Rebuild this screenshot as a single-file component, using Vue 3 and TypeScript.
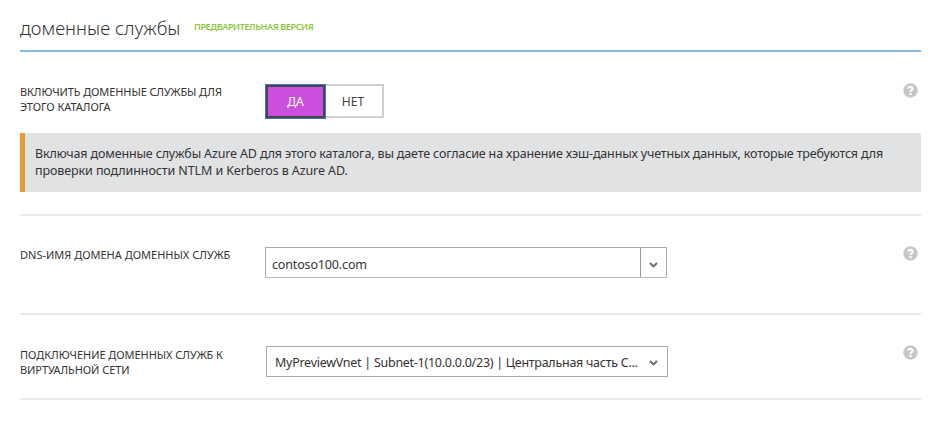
<script setup lang="ts">
import { ref } from 'vue'

const enabled = ref(true)
const domainName = ref('contoso100.com')
const network = 'MyPreviewVnet | Subnet-1(10.0.0.0/23) | Центральная часть С...'
</script>

<template>
  <main class="page">
    <header class="header">
      <h1 class="title">доменные службы</h1>
      <span class="preview">ПРЕДВАРИТЕЛЬНАЯ ВЕРСИЯ</span>
    </header>

    <section class="section section-enable">
      <div class="row">
        <div class="label"><span class="enable-a">ВКЛЮЧИТЬ ДОМЕННЫЕ СЛУЖБЫ ДЛЯ</span><br /><span class="enable-b">ЭТОГО КАТАЛОГА</span></div>
        <div class="toggle">
          <button class="option" :class="{ active: enabled }" @click="enabled = true">ДА</button>
          <button class="option" :class="{ active: !enabled }" @click="enabled = false">НЕТ</button>
        </div>
        <svg class="help" viewBox="0 0 15 15"><circle cx="7.5" cy="7.5" r="7.2" fill="#c6c6c6" /><path d="M5.2 5.5C5.4 3.4 9.7 3.3 9.7 5.6C9.7 7.1 7.5 7.1 7.5 9" fill="none" stroke="#fff" stroke-width="2.2" /><rect x="6.4" y="10" width="2.2" height="2" fill="#fff" /></svg>
      </div>
      <div class="notice">
        <span class="notice-a">Включая доменные службы Azure AD для этого каталога, вы даете согласие на хранение хэш-данных учетных данных, которые требуются для</span><br />
        <span class="notice-b">проверки подлинности NTLM и Kerberos в Azure AD.</span>
      </div>
    </section>

    <section class="section section-dns">
      <div class="row">
        <div class="label"><span class="dns">DNS-ИМЯ ДОМЕНА ДОМЕННЫХ СЛУЖБ</span></div>
        <div class="combo">
          <div class="combo-value"><span>{{ domainName }}</span></div>
          <div class="combo-arrow">
            <svg class="chevron" viewBox="0 0 9 6"><path d="M1 1L4.5 4.4L8 1" fill="none" stroke="#666" stroke-width="1.8" /></svg>
          </div>
        </div>
        <svg class="help" viewBox="0 0 15 15"><circle cx="7.5" cy="7.5" r="7.2" fill="#c6c6c6" /><path d="M5.2 5.5C5.4 3.4 9.7 3.3 9.7 5.6C9.7 7.1 7.5 7.1 7.5 9" fill="none" stroke="#fff" stroke-width="2.2" /><rect x="6.4" y="10" width="2.2" height="2" fill="#fff" /></svg>
      </div>
    </section>

    <section class="section section-vnet">
      <div class="row">
        <div class="label label-vnet"><span class="vnet-a">ПОДКЛЮЧЕНИЕ ДОМЕННЫХ СЛУЖБ К</span><br /><span class="vnet-b">ВИРТУАЛЬНОЙ СЕТИ</span></div>
        <div class="select">
          <span class="select-value">{{ network }}</span>
          <svg class="chevron" viewBox="0 0 9 6"><path d="M1 1L4.5 4.4L8 1" fill="none" stroke="#666" stroke-width="1.8" /></svg>
        </div>
        <svg class="help" viewBox="0 0 15 15"><circle cx="7.5" cy="7.5" r="7.2" fill="#c6c6c6" /><path d="M5.2 5.5C5.4 3.4 9.7 3.3 9.7 5.6C9.7 7.1 7.5 7.1 7.5 9" fill="none" stroke="#fff" stroke-width="2.2" /><rect x="6.4" y="10" width="2.2" height="2" fill="#fff" /></svg>
      </div>
    </section>
  </main>
</template>

<style>
body { background: #fff; }
</style>

<style scoped>
* { box-sizing: border-box; }
.page {
  height: 424px;
  padding: 0 17px 0 20px;
  overflow: hidden;
  color: #333;
  font-family: "Noto Sans", "Open Sans", sans-serif;
  white-space: nowrap;
}
.header {
  display: flex;
  height: 52px;
  border-bottom: 2px solid #86b9e6;
}
.title {
  width: 174px;
  margin: 0;
  padding-top: 15px;
  font-size: 18.5px;
  line-height: 25px;
  font-weight: 300;
}
.preview {
  padding-top: 21px;
  color: #8cc63f;
  font-size: 9px;
  line-height: 12px;
  font-weight: 600;
  letter-spacing: -0.37px;
}
.section { border-bottom: 2px solid #e9e9e9; }
.section-enable { height: 164px; padding-top: 32px; }
.section-dns { height: 99px; padding-top: 31px; }
.section-vnet { height: 85px; padding-top: 31px; }
.row { display: flex; align-items: flex-start; }
.label {
  width: 245px;
  font-size: 11px;
  line-height: 15px;
}
.label-vnet { padding-top: 1px; }
.enable-a { letter-spacing: -0.1px; }
.enable-b { letter-spacing: -0.05px; }
.vnet-a, .vnet-b { letter-spacing: -0.05px; }
.toggle { display: flex; width: 119px; height: 35px; }
.option {
  width: 58px;
  height: 34px;
  padding: 0 2px 0 0;
  border: 2px solid #cfcfcf;
  border-left: 0;
  background: #fff;
  color: #444;
  font-family: inherit;
  font-size: 12px;
}
.option.active {
  width: 61px;
  height: 35px;
  padding: 0;
  border: 3px solid #454550;
  outline: 1px solid #4274b9;
  outline-offset: -1px;
  background: #c94fdc;
  color: #fff;
}
.help { width: 15px; height: 15px; margin: -1px 3px 0 auto; }
.notice {
  height: 59px;
  margin-top: 14px;
  padding: 12px 0 0 10px;
  border-left: 5px solid #e59c35;
  background: #e1e2e4;
  font-size: 12.5px;
  line-height: 17px;
}
.notice-a { letter-spacing: -0.152px; }
.notice-b { letter-spacing: -0.1px; }
.combo, .select {
  display: flex;
  height: 30px;
  border: 1px solid #aaa;
  font-size: 12.5px;
}
.combo { width: 402px; height: 31px; border-bottom-color: #bbb; }
.combo-value {
  flex: 1;
  padding: 4px 0 0 6px;
  line-height: 26px;
  letter-spacing: -0.15px;
}
.combo-arrow {
  display: flex;
  width: 26px;
  padding-top: 4px;
  align-items: center;
  justify-content: center;
  border-left: 1px solid #999;
}
.chevron { display: block; flex: none; width: 9px; height: 6px; }
.select {
  width: 402px;
  height: 31px;
  margin-left: 1px;
  padding: 2px 9px 0 8px;
  align-items: center;
  justify-content: space-between;
}
.select-value { letter-spacing: -0.27px; }
</style>
